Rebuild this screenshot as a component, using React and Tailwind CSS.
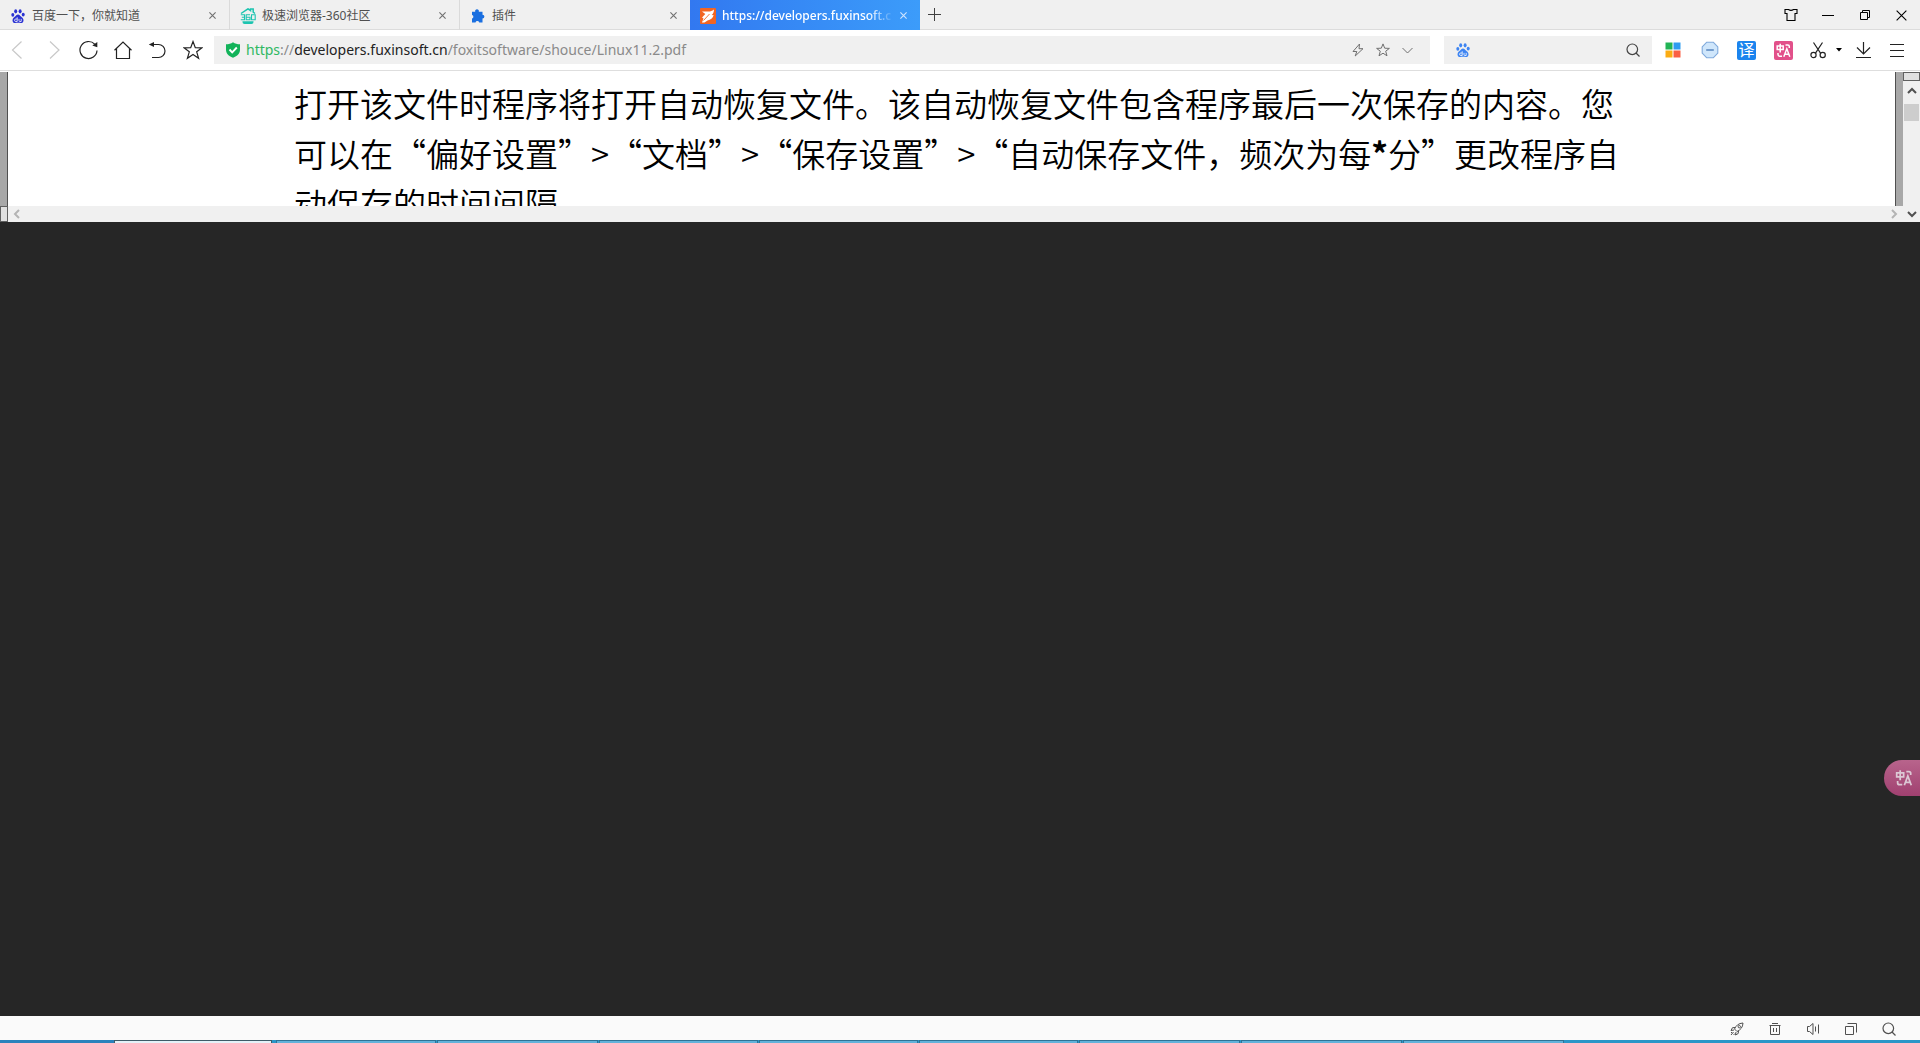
import { useState } from 'react';
import clsx from 'clsx';

const Svg = ({ size = 20, className, children }) => (
  <svg
    width={size}
    height={size}
    viewBox={`0 0 ${size} ${size}`}
    fill="none"
    stroke="currentColor"
    strokeWidth="1"
    className={clsx('shrink-0', className)}
    aria-hidden="true"
  >
    {children}
  </svg>
);

const PawIcon = ({ size = 14, className }) => (
  <svg width={size} height={size} viewBox="0 0 14 14" fill="currentColor" className={clsx('shrink-0', className)} aria-hidden="true">
    <ellipse cx="4.7" cy="2.3" rx="1.5" ry="2.1" />
    <ellipse cx="9.1" cy="2.3" rx="1.5" ry="2.1" />
    <ellipse cx="1.8" cy="5.8" rx="1.5" ry="1.9" />
    <ellipse cx="12.2" cy="5.6" rx="1.5" ry="1.9" />
    <path d="M7 5.4c1.5 0 2.1 1.1 3 2.2 1 1.1 2.5 1.9 2.5 3.8 0 1.7-1.2 2.6-2.7 2.6-1.1 0-1.8-.2-2.8-.2s-1.7.2-2.8.2c-1.5 0-2.7-.9-2.7-2.6 0-1.9 1.5-2.7 2.5-3.8.9-1.1 1.5-2.2 3-2.2z" />
    <path d="M6.200 8.300v4.200h-1.400a1.200 1.200 0 0 1 0-2.500h1.400M8 9.900v1.700q0 .9.900.9h1.300V9.900" fill="none" stroke="#fff" strokeWidth=".8" />
  </svg>
);

const HouseLogo = () => (
  <svg width="16" height="16" viewBox="0 0 16 16" className="shrink-0" aria-hidden="true">
    <path d="M1 5.500 8 .8l2.500 1.700V1h2.700v3.200L15 5.500" fill="none" stroke="#1cc4b0" strokeWidth="1.500" />
    <path d="M.8 6.800h3.700v5H.8M1.800 9.300h2.700M10 6.800H6.200v5H10V9.300H6.200M11.500 6.800h3.700v5h-3.700z" fill="none" stroke="#1cc4b0" strokeWidth="1.100" />
    <path d="M2.500 13.300h11v.7q0 2-2 2h-7q-2 0-2-2z" fill="#1cc4b0" />
  </svg>
);

const PuzzleIcon = () => (
  <svg width="14" height="14" viewBox="0 0 14 14" fill="#1a6fe0" className="shrink-0" aria-hidden="true">
    <path d="M1 2.700h3.200a1.900 1.900 0 1 1 3.600 0h3.700v3a1.900 1.900 0 1 1 0 3.800v4H8.200a1.900 1.900 0 0 0-3.700 0H1V9.500a1.800 1.800 0 0 0 0-3.500z" />
  </svg>
);

const FoxitLogo = () => (
  <svg width="16" height="16" viewBox="0 0 16 16" className="shrink-0" aria-hidden="true">
    <rect width="16" height="16" rx="1" fill="#f26522" />
    <path d="M2 3.500h6.500c2 0 3.500-.6 5.500-2-.1 2.500-.8 4.100-2.300 5.500l2 .3c-1 3-3 4.700-6.200 5.200L4.500 14.500H2l1.500-4L2 9.500 5.300 6z" fill="#fff" />
    <path d="M3.500 12.500 9.500 6" stroke="#f26522" strokeWidth=".9" />
  </svg>
);

const BackIcon = () => <Svg><path d="M13.500 1.500 4.500 10l9 8.500" strokeWidth="1.200" /></Svg>;
const ForwardIcon = () => <Svg><path d="m7 1.500 9 8.500-9 8.500" strokeWidth="1.200" /></Svg>;
const ReloadIcon = () => (
  <Svg>
    <path d="M19 10.500A8.500 8.500 0 1 1 16.700 4.200" strokeWidth="1.200" />
    <path d="M19.300 2v5.200l-5-1.700z" fill="currentColor" stroke="none" />
  </Svg>
);
const HomeIcon = () => <Svg><path d="M1.500 10.200 10 2l8.500 8.200M3.500 8.500v10h13v-10" strokeWidth="1.200" /></Svg>;
const UndoIcon = () => (
  <Svg>
    <path d="M3 4.500h7.500a6.500 6.500 0 0 1 0 13H4" strokeWidth="1.200" />
    <path d="M.8 4.500 6 2v5z" fill="currentColor" stroke="none" />
  </Svg>
);
const StarIcon = () => (
  <Svg><path d="m10 1.500 2.300 6.100 6.700.2-5.300 4 1.900 6.500L10 14.500l-5.600 3.800 1.900-6.500-5.300-4 6.700-.2z" strokeWidth="1.200" /></Svg>
);
const ShieldIcon = () => (
  <svg width="14" height="16" viewBox="0 0 14 16" className="shrink-0" aria-hidden="true">
    <path d="M7 .3c2 1.400 4.300 2 7 2v5.500c0 3.800-2.500 6.300-7 8-4.500-1.700-7-4.200-7-8V2.300c2.700 0 5-.6 7-2z" fill="#12b35a" />
    <path d="m3.500 7.500 2.700 2.800 4.600-4.800" fill="none" stroke="#fff" strokeWidth="1.900" />
  </svg>
);
const BoltIcon = () => <Svg size={14}><path d="M8.500 1 2 8.500h3.800L4.200 13 12 5.700H8z" /></Svg>;
const SmallStarIcon = () => (
  <Svg size={14}><path d="m7 .9 1.700 4.300 4.700.2L9.700 8.200l1.300 4.600L7 10.200l-4 2.600 1.300-4.600L.6 5.400l4.700-.2z" /></Svg>
);
const ChevronIcon = () => <Svg size={14}><path d="m1.500 5 5 5 5-5" /></Svg>;
const SearchIcon = () => (
  <Svg size={14}>
    <circle cx="6.300" cy="6.300" r="5.300" strokeWidth="1.200" />
    <path d="m10 10 3.500 3.500" strokeWidth="1.200" />
  </Svg>
);
const CloseIcon = ({ size = 7 }) => (
  <svg width={size} height={size} viewBox="0 0 7 7" fill="none" stroke="currentColor" strokeWidth={size > 8 ? 0.7 : 1.1} aria-hidden="true">
    <path d="m.4.4 6.200 6.200M6.600.4.4 6.600" />
  </svg>
);

const ColorGridIcon = () => (
  <svg width="16" height="16" viewBox="0 0 16 16" aria-hidden="true">
    <path fill="#22b455" d="M.5.5h7v7h-7z" />
    <path fill="#2f9cf0" d="M8.500.5h7v7h-7z" />
    <path fill="#fbac12" d="M.5 8.500h7v7h-7z" />
    <path fill="#fa5f43" d="M8.500 8.500h7v7h-7z" />
  </svg>
);
const MinusBadgeIcon = () => (
  <svg width="18" height="18" viewBox="0 0 18 18" aria-hidden="true">
    <path d="M5.800 1.200h6.400l4.600 4.600v6.400l-4.600 4.600H5.800l-4.600-4.600V5.800z" fill="#cfe6fb" stroke="#7fa9dc" strokeWidth="1.100" strokeLinejoin="round" />
    <path d="M5.200 9h7.600" stroke="#5684bf" strokeWidth="1.500" />
  </svg>
);
const TranslateGlyph = ({ size = 19 }) => (
  <svg width={size} height={size} viewBox="0 0 19 19" fill="none" stroke="currentColor" strokeWidth="1.500" aria-hidden="true">
    <path d="M3.200 5h6v3.500h-6zM6.200 2.800v8.700M11.500 4h2.300q1.500 0 1.500 1.500V7M4 12v1.500q0 1.700 1.700 1.700H8" />
    <path d="m9.800 15.800 3-8 3 8M10.800 13.200h4" />
  </svg>
);
const ScissorsIcon = () => (
  <Svg size={18}>
    <path d="m4.500 1.500 7 10.700M13.500 1.500 6.500 12.200" strokeWidth="1.200" />
    <circle cx="4.500" cy="14" r="2.600" strokeWidth="1.200" />
    <circle cx="13.700" cy="14" r="2.600" strokeWidth="1.200" />
  </Svg>
);
const CaretIcon = () => (
  <svg width="6" height="4" viewBox="0 0 6 4" fill="currentColor" aria-hidden="true"><path d="M0 0h6L3 3.500z" /></svg>
);
const DownloadIcon = () => <Svg size={18}><path d="M9.500 1v12M3 6.500 9.500 13 16 6.500M2 16.500h15" strokeWidth="1.200" /></Svg>;
const MenuIcon = () => <Svg size={16}><path d="M1 2.500h14M1 8.500h14M1 14.500h14" /></Svg>;

const ShirtIcon = () => (
  <Svg size={14}><path d="M1 1.500h3.500q2.500 1.800 5 0H13v4h-2v7H3v-7H1z" strokeWidth="1.100" /></Svg>
);
const MinimizeIcon = () => <Svg size={12}><path d="M0 6.500h12" /></Svg>;
const RestoreIcon = () => <Svg size={10}><path d="M.5 2.500h7v7h-7zM2.500 2.500v-2h7v7h-2" /></Svg>;

const RocketIcon = () => (
  <Svg size={14}>
    <path d="M4.500 7c1.500-3.500 4-5.700 8.500-6-.2 4.300-2.500 7-6 8.500zM5 5.500 2.500 5.700 1 8.500l3-.5M8.500 9l-.3 2.500L5.500 13l.5-3M3.500 10 1 13M5 11.500 3.500 13M2 10l-1 1" />
    <circle cx="9.300" cy="4.700" r="1.200" />
  </Svg>
);
const TrashIcon = () => <Svg size={14}><path d="M1.500 3.500h11M4 1.500h6M2.500 3.500v9h9v-9M5.500 6v4M8.500 6v4" /></Svg>;
const VolumeIcon = () => <Svg size={14}><path d="M1.500 4.500h2l3.500-3v11l-3.500-3h-2zM9.500 4.500v5M12.500 2.500v9" /></Svg>;
const PopOutIcon = () => <Svg size={14}><path d="M1.500 4.500h8v8h-8zM3.500 1.500h9v9" /></Svg>;
const ArrowIcon = ({ d }) => (
  <svg width="10" height="10" viewBox="0 0 10 10" fill="none" stroke="currentColor" strokeWidth="2" aria-hidden="true"><path d={d} /></svg>
);

const TABS = [
  { title: '百度一下，你就知道', icon: <PawIcon className="text-[#2a32d2]" /> },
  { title: '极速浏览器-360社区', icon: <HouseLogo /> },
  { title: '插件', icon: <PuzzleIcon /> },
  { title: 'https://developers.fuxinsoft.c', icon: <FoxitLogo /> },
];

const WINDOW_BUTTONS = [
  { label: '皮肤', icon: <ShirtIcon /> },
  { label: '最小化', icon: <MinimizeIcon /> },
  { label: '还原', icon: <RestoreIcon /> },
  { label: '关闭', icon: <CloseIcon size={11} /> },
];

const NAV_BUTTONS = [
  { label: '后退', icon: <BackIcon />, disabled: true },
  { label: '前进', icon: <ForwardIcon />, disabled: true },
  { label: '刷新', icon: <ReloadIcon /> },
  { label: '主页', icon: <HomeIcon /> },
  { label: '恢复', icon: <UndoIcon /> },
  { label: '收藏', icon: <StarIcon /> },
];

const STATUS_BUTTONS = [
  { label: '加速', icon: <RocketIcon /> },
  { label: '清理', icon: <TrashIcon /> },
  { label: '声音', icon: <VolumeIcon /> },
  { label: '窗口', icon: <PopOutIcon /> },
  { label: '缩放', icon: <SearchIcon /> },
];

const IconButton = ({ label, className, children, ...rest }) => (
  <button type="button" aria-label={label} className={clsx('flex shrink-0 items-center justify-center', className)} {...rest}>
    {children}
  </button>
);

const TabBar = () => {
  const [active, setActive] = useState(3);

  return (
    <header className="flex h-[30px] border-b border-[#dcdcdc] bg-[#f0f0f0]">
      {TABS.map((tab, i) => {
        const isActive = i === active;
        return (
          <div
            key={tab.title}
            className={clsx(
              'flex h-[30px] w-[230px] items-center pt-px pr-3',
              isActive ? 'bg-linear-to-r from-[#3278f0] to-[#3c9cfa] text-white' : 'text-[#505050]',
              !isActive && i < 2 && 'border-r border-[#dadada]'
            )}
          >
            <button type="button" onClick={() => setActive(i)} className="flex min-w-0 flex-1 items-center gap-1.5 pl-2.5 text-left">
              <span className="flex w-4 justify-center">{tab.icon}</span>
              <span
                className={clsx(
                  'flex-1 overflow-hidden text-xs whitespace-nowrap',
                  isActive && 'mask-r-from-85% font-medium'
                )}
              >
                {tab.title}
              </span>
            </button>
            <IconButton label="关闭标签页" className={clsx('ml-1 w-2.5', isActive ? 'text-[#cfe4ff]' : 'text-[#707070]')}>
              <CloseIcon />
            </IconButton>
          </div>
        );
      })}
      <IconButton label="新标签页" className="w-7 text-[#404040]">
        <Svg size={13}><path d="M6.500 0v13M0 6.500h13" /></Svg>
      </IconButton>
      <div className="ml-auto flex pt-px text-black">
        {WINDOW_BUTTONS.map((b) => (
          <IconButton key={b.label} label={b.label} className="w-[37px]">{b.icon}</IconButton>
        ))}
      </div>
    </header>
  );
};

const Toolbar = () => (
  <div className="flex h-[41px] items-center border-b border-[#dedede] bg-white pr-2 text-[#222]">
    <nav className="mr-1 flex">
      {NAV_BUTTONS.map((b) => (
        <IconButton key={b.label} label={b.label} disabled={b.disabled} className="w-[35px] disabled:text-[#c8c8c8]">
          {b.icon}
        </IconButton>
      ))}
    </nav>

    <div className="flex h-7 min-w-0 flex-1 items-center bg-[#f0f0f0] pl-3">
      <ShieldIcon />
      <label htmlFor="address" className="ml-1.5 text-sm whitespace-nowrap text-[#8a8a8a]">
        <span className="text-[#2fb863]">https</span>://<span className="text-[#222]">developers.fuxinsoft.cn</span>
        /foxitsoftware/shouce/Linux11.2.pdf
      </label>
      <input id="address" type="text" className="h-full min-w-0 flex-1 bg-transparent outline-none" />
      <div className="flex pr-2.5 text-[#707070]">
        <IconButton label="极速模式" className="w-[25px]"><BoltIcon /></IconButton>
        <IconButton label="收藏此页" className="w-[25px]"><SmallStarIcon /></IconButton>
        <IconButton label="展开" className="w-[25px]"><ChevronIcon /></IconButton>
      </div>
    </div>

    <div className="ml-3.5 flex h-7 w-52 items-center bg-[#f0f0f0] px-3">
      <PawIcon className="text-[#3d84f2]" />
      <input type="text" aria-label="搜索" className="h-full min-w-0 flex-1 bg-transparent outline-none" />
      <IconButton label="搜索" className="text-[#444]"><SearchIcon /></IconButton>
    </div>

    <div className="ml-0.5 flex items-center">
      <IconButton label="应用" className="w-[37px]"><ColorGridIcon /></IconButton>
      <IconButton label="拦截" className="w-[37px]"><MinusBadgeIcon /></IconButton>
      <IconButton label="翻译" className="w-[37px]">
        <span className="flex size-[19px] items-center justify-center rounded-xs bg-[#1b84ee] text-base leading-none text-white">译</span>
      </IconButton>
      <IconButton label="划词翻译" className="w-[37px]">
        <span className="rounded-xs bg-[#e2508a] text-white"><TranslateGlyph /></span>
      </IconButton>
      <IconButton label="截图" className="w-8"><ScissorsIcon /></IconButton>
      <IconButton label="截图选项" className="w-2.5 text-black"><CaretIcon /></IconButton>
      <IconButton label="下载" className="w-[38px]"><DownloadIcon /></IconButton>
      <IconButton label="菜单" className="w-[30px]"><MenuIcon /></IconButton>
    </div>
  </div>
);

const PdfPane = () => (
  <section className="flex h-[151px] border-t border-white bg-[#f0f0f0]">
    <div className="flex min-w-0 flex-1 flex-col">
      <div className="flex h-[134px] border-x-[7px] border-[#a8a8a8]">
        <div className="flex-1 overflow-hidden border-x border-[#505050] bg-white pt-1.5 pl-[286px] font-['Noto_Sans_CJK_SC',sans-serif] text-[33px] leading-[50px] font-[350] whitespace-nowrap text-black">
          <p>打开该文件时程序将打开自动恢复文件。该自动恢复文件包含程序最后一次保存的内容。您</p>
          <p>可以在“偏好设置”&gt;“文档”&gt;“保存设置”&gt;“自动保存文件，频次为每<b>*</b>分”更改程序自</p>
          <p>动保存的时间间隔</p>
        </div>
      </div>
      <div className="flex h-4 items-center text-[#b4b4b4]">
        <span className="mr-1 h-4 w-2 border border-[#606060] bg-[#e0e0e0]" />
        <IconButton label="向左滚动"><ArrowIcon d="M7 1 3 5l4 4" /></IconButton>
        <IconButton label="向右滚动" className="ml-auto mr-1"><ArrowIcon d="m3 1 4 4-4 4" /></IconButton>
      </div>
    </div>
    <div className="flex w-[17px] flex-col items-center text-[#505050]">
      <span className="h-[9px] w-full border border-[#606060] bg-[#e0e0e0]" />
      <IconButton label="向上滚动" className="h-[23px] pb-1"><ArrowIcon d="m1 7 4-4 4 4" /></IconButton>
      <span className="h-[17px] w-[15px] bg-[#cdcdcd]" />
      <IconButton label="向下滚动" className="mt-auto h-[17px]"><ArrowIcon d="m1 3 4 4 4-4" /></IconButton>
    </div>
  </section>
);

const TaskButton = ({ className }) => (
  <span className={clsx('mr-px h-[3px] border border-b-0 border-[#2e7396] bg-[#62b2da]', className)} />
);

const Taskbar = () => (
  <div className="flex h-[3px] bg-[#2a96c8]">
    <span className="w-[114px] bg-[#2a82bc]" />
    <span className="mr-1 w-[158px] border border-b-0 border-[#3e5c68] bg-[#e4f2f8]" />
    <TaskButton className="w-[160px]" />
    <TaskButton className="w-[161px]" />
    <TaskButton className="w-[159px]" />
    <TaskButton className="w-[159px]" />
    <TaskButton className="w-[159px]" />
    <TaskButton className="w-[161px]" />
    <TaskButton className="w-[161px]" />
    <TaskButton className="w-[161px]" />
  </div>
);

export default function App() {
  return (
    <div className="relative flex min-h-screen flex-col bg-[#262626] font-['Noto_Sans','Noto_Sans_CJK_SC',sans-serif]">
      <TabBar />
      <Toolbar />
      <PdfPane />
      <main className="flex-1" />
      <footer className="flex h-6 justify-end bg-[#fafafa] pr-3 text-[#505050]">
        {STATUS_BUTTONS.map((b) => (
          <IconButton key={b.label} label={b.label} className="w-[38px] pt-0.5">{b.icon}</IconButton>
        ))}
      </footer>
      <Taskbar />

      {/* Floating translate handle */}
      <IconButton
        label="网页翻译"
        className="absolute top-[760px] right-0 h-9 w-9 rounded-l-full bg-linear-to-b from-[#b8648c] to-[#a04070] pl-1 text-[#dcc8d4]"
      >
        <TranslateGlyph size={22} />
      </IconButton>
    </div>
  );
}
